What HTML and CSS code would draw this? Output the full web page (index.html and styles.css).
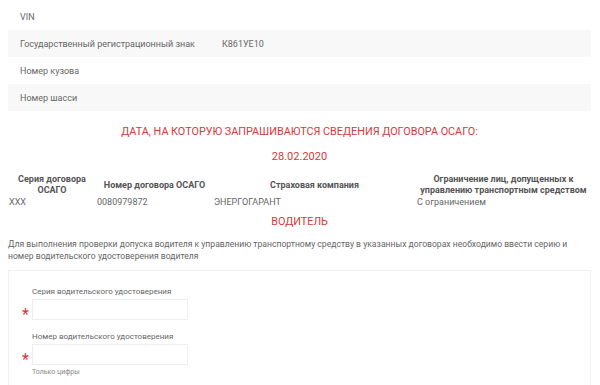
FILE: index.html
```html
<!DOCTYPE html>
<html lang="ru">
<head>
  <meta charset="UTF-8">
  <title>Проверка ОСАГО</title>
  <link rel="stylesheet" href="styles.css">
</head>
<body>
  <div class="page">
    <table class="info">
      <tr><td class="key">VIN</td><td></td></tr>
      <tr><td class="key">Государственный регистрационный знак</td><td>К861УЕ10</td></tr>
      <tr><td class="key">Номер кузова</td><td></td></tr>
      <tr><td class="key">Номер шасси</td><td></td></tr>
    </table>

    <h2 class="title">ДАТА, НА КОТОРУЮ ЗАПРАШИВАЮТСЯ СВЕДЕНИЯ ДОГОВОРА ОСАГО:</h2>
    <div class="date">28.02.2020</div>

    <table class="policy">
      <tr>
        <th class="c1">Серия договора ОСАГО</th>
        <th class="c2">Номер договора ОСАГО</th>
        <th class="c3">Страховая компания</th>
        <th class="c4">Ограничение лиц, допущенных к управлению транспортным средством</th>
      </tr>
      <tr>
        <td>XXX</td>
        <td>0080979872</td>
        <td>ЭНЕРГОГАРАНТ</td>
        <td>С ограничением</td>
      </tr>
    </table>

    <h2 class="title driver">ВОДИТЕЛЬ</h2>
    <p class="note">Для выполнения проверки допуска водителя к управлению транспортному средству в указанных договорах необходимо ввести серию и номер водительского удостоверения водителя</p>

    <div class="form">
      <div class="field">
        <label>Серия водительского удостоверения</label>
        <div class="row"><span class="req">*</span><input type="text"></div>
      </div>
      <div class="field">
        <label>Номер водительского удостоверения</label>
        <div class="row"><span class="req">*</span><input type="text"></div>
        <div class="hint">Только цифры</div>
      </div>
    </div>
  </div>
</body>
</html>
```

FILE: styles.css
```css
body {
  margin: 0;
  font-family: Roboto, "Liberation Sans", sans-serif;
  color: #666;
  background: #fff;
}
.page {
  width: 583px;
  padding: 3px 9px 0 8px;
}
.info {
  width: 100%;
  border-collapse: collapse;
  font-size: 9px;
}
.info td {
  height: 27px;
  padding: 0;
  vertical-align: middle;
}
.info tr:nth-child(2n) td { background: #f8f8f8; }
.info .key {
  width: 202px;
  padding-left: 12px;
}
.title {
  margin: 13px 0 0;
  text-align: center;
  font-size: 10.8px;
  font-weight: normal;
  line-height: 16px;
  color: #d33a3a;
}
.date {
  margin-top: 9px;
  text-align: center;
  font-size: 11px;
  line-height: 16px;
  color: #d33a3a;
}
.policy {
  width: 100%;
  margin-top: 9px;
  border-collapse: collapse;
  table-layout: fixed;
  font-size: 9px;
}
.policy th {
  padding: 0;
  font-weight: bold;
  color: #555;
  line-height: 11px;
  text-align: center;
  vertical-align: middle;
}
.policy td {
  padding: 0 0 0 1px;
  line-height: 12px;
}
.policy .c1 { width: 88px; }
.policy .c2 { width: 117px; }
.policy .c3 { width: 203px; }
.driver { margin-top: 6px; }
.note {
  margin: 8px 0 0;
  font-size: 8.6px;
  line-height: 12px;
}
.form {
  margin-top: 8px;
  height: 140px;
  border: 1px solid #f0f0f0;
  padding: 16px 0 0 13px;
}
.field { margin-bottom: 12px; }
.field label {
  display: block;
  margin-left: 10px;
  font-size: 8px;
  line-height: 10px;
}
.row {
  display: flex;
  align-items: center;
  margin-top: 2px;
}
.req {
  width: 10px;
  padding-top: 10px;
  color: #d33a3a;
  font-size: 16px;
  line-height: 10px;
}
.row input {
  width: 156px;
  height: 21px;
  box-sizing: border-box;
  margin: 0;
  border: 1px solid #eee;
  outline: none;
}
.hint {
  margin: 3px 0 0 10px;
  font-size: 7px;
  color: #888;
}
```
